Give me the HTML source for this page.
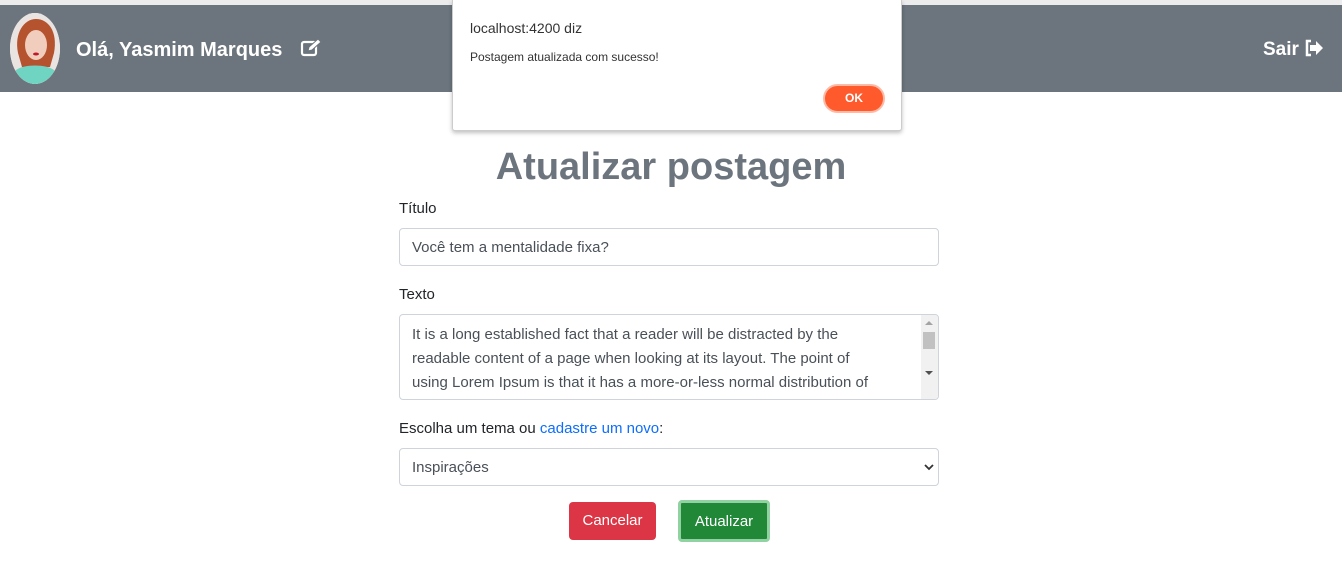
<!DOCTYPE html>
<html><head><meta charset="utf-8"><style>
*{box-sizing:border-box;margin:0;padding:0}
body{width:1342px;height:583px;overflow:hidden;background:#fff;font-family:"Liberation Sans",sans-serif;color:#212529;position:relative}
.top{position:absolute;left:0;top:0;width:1342px;height:5px;background:#ececec}
.nav{position:absolute;left:0;top:5px;width:1342px;height:87px;background:#6c757d}
.av{position:absolute;left:10px;top:8px;width:50px;height:71px;border-radius:50%;overflow:hidden;background:#eee}
.hello{position:absolute;left:76px;top:33px;color:#fff;font-weight:bold;font-size:20px}
.sair{position:absolute;left:1263px;top:34px;color:#fff;font-weight:bold;font-size:19px}
.dlg{position:absolute;left:452px;top:0;width:450px;height:131px;background:#fff;border:1px solid #ccc;border-top:none;box-shadow:0 2px 4px rgba(0,0,0,.25);border-radius:0 0 3px 3px}
.dlg .h{position:absolute;left:17px;top:20px;font-size:14px;color:#333}
.dlg .m{position:absolute;left:17px;top:50px;font-size:12px;color:#333}
.ok{position:absolute;left:370px;top:84px;width:62px;height:29px;border-radius:15px;background:#fe5a2c;border:2px solid #ffb9a5;color:#fff;font-weight:bold;font-size:12px;text-align:center;line-height:25px}
h1{position:absolute;left:0;width:1342px;top:146px;text-align:center;font-size:38px;color:#6c757d;font-weight:bold}
.lbl{position:absolute;left:399px;font-size:15px}
.in{position:absolute;left:399px;width:540px;border:1px solid #ced4da;border-radius:4px;font-size:15px;color:#495057;padding-left:12px}
a{color:#0d6efd;text-decoration:none}
.btn{position:absolute;top:502px;height:38px;border-radius:4px;color:#fff;font-size:15px;text-align:center;line-height:38px}
</style></head><body>
<div class="top"></div>
<div class="nav">
<div class="av"><svg width="50" height="71" viewBox="0 0 50 71"><rect width="50" height="71" fill="#e9e4e2"/><path d="M8 40C4 20 14 6 26 6s22 12 18 34l-4 14H12z" fill="#b4532e"/><ellipse cx="26" cy="32" rx="11" ry="15" fill="#f0cdbd"/><path d="M0 71l6-14c8-6 30-6 38 0l6 14z" fill="#6fd4c2"/><ellipse cx="26" cy="41" rx="3" ry="1.5" fill="#c0182a"/></svg></div>
<div class="hello">Olá, Yasmim Marques
<svg width="22" height="20" viewBox="0 0 22 20" style="vertical-align:-2px;margin-left:12px"><rect x="2" y="4" width="14" height="13" rx="2" fill="none" stroke="#fff" stroke-width="2.2"/><path d="M8 13l1-4 9-8 3 3-9 8z" fill="#fff" stroke="#6c757d" stroke-width="1"/></svg></div>
<div class="sair">Sair <svg width="20" height="18" viewBox="0 0 20 18" style="vertical-align:-2px"><path d="M7 2H3v14h4" fill="none" stroke="#fff" stroke-width="2.5"/><path d="M6 6h6V2l7 7-7 7v-4H6z" fill="#fff"/></svg></div>
</div>
<div class="dlg"><div class="h">localhost:4200 diz</div><div class="m">Postagem atualizada com sucesso!</div><div class="ok">OK</div></div>
<h1>Atualizar postagem</h1>
<div class="lbl" style="top:200px">Título</div>
<div class="in" style="top:228px;height:38px;line-height:38px">Você tem a mentalidade fixa?</div>
<div class="lbl" style="top:286px">Texto</div>
<div class="in" style="top:314px;height:86px;padding-top:8px;line-height:24px;overflow:hidden">It is a long established fact that a reader will be distracted by the<br>readable content of a page when looking at its layout. The point of<br>using Lorem Ipsum is that it has a more-or-less normal distribution of
<div style="position:absolute;right:0;top:0;width:17px;height:84px;background:#f1f1f1"><div style="position:absolute;left:2px;top:17px;width:12px;height:17px;background:#c1c1c1"></div><div style="position:absolute;left:4px;top:6px;border:4px solid transparent;border-bottom:4px solid #a3a3a3;border-top:0"></div><div style="position:absolute;left:4px;top:56px;border:4px solid transparent;border-top:4px solid #505050;border-bottom:0"></div></div></div>
<div class="lbl" style="top:420px">Escolha um tema ou <a>cadastre um novo</a>:</div>
<div class="in" style="top:448px;height:38px;line-height:38px;padding-left:12px">Inspirações<svg style="position:absolute;right:4px;top:14px" width="10" height="8" viewBox="0 0 10 8"><path d="M1 2l4 4 4-4" fill="none" stroke="#333" stroke-width="1.8"/></svg></div>
<div class="btn" style="left:569px;width:87px;background:#dc3545">Cancelar</div>
<div class="btn" style="left:678px;width:92px;height:42px;top:500px;background:#218838;border:3px solid #92d2a2;line-height:38px">Atualizar</div>
</body></html>
